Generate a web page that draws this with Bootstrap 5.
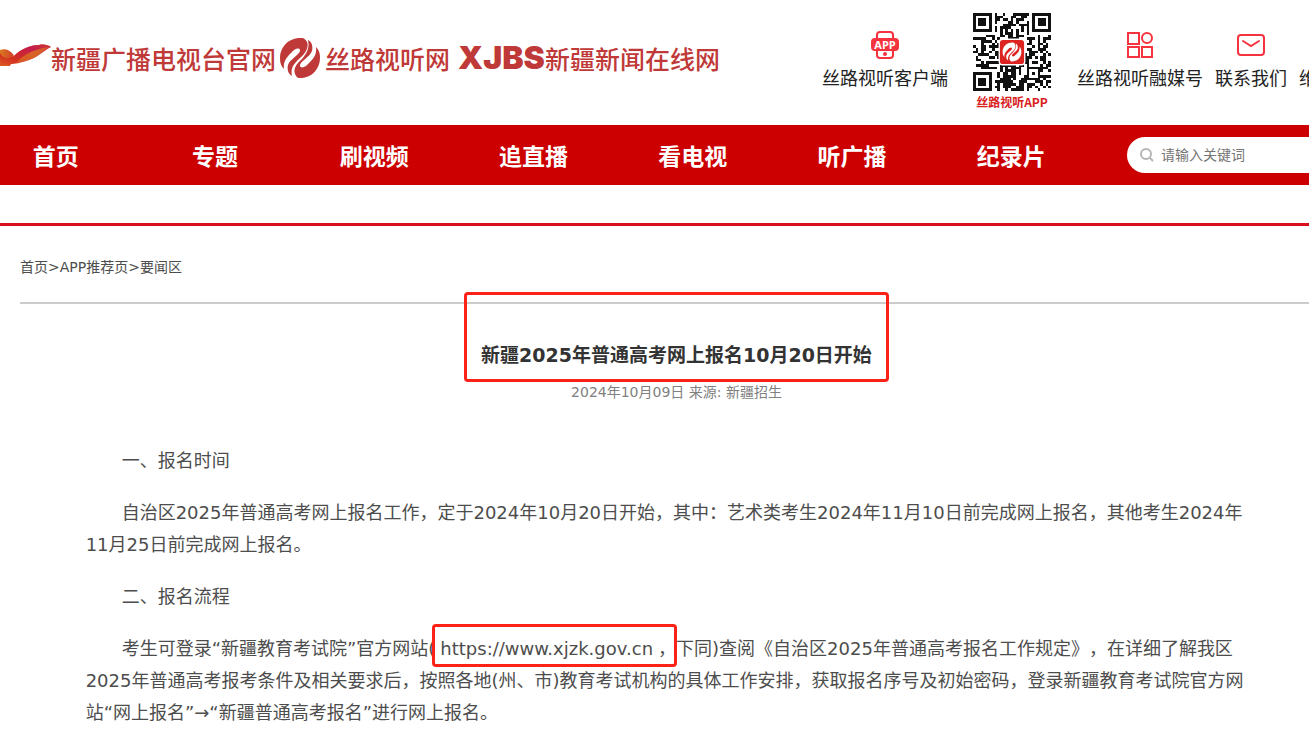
<!DOCTYPE html>
<html lang="zh-CN">
<head>
<meta charset="utf-8">
<meta name="viewport" content="width=device-width, initial-scale=1">
<title>新疆2025年普通高考网上报名10月20日开始</title>
<link href="https://cdn.jsdelivr.net/npm/bootstrap@5.3.0/dist/css/bootstrap.min.css" rel="stylesheet">
<style>
  body { font-family: "DejaVu Sans", "Noto Sans CJK SC", sans-serif; color: #4d4d4d; overflow-x: hidden; text-spacing-trim: space-all; }
  a { color: inherit; text-decoration: none; }
  /* the site is slightly wider than the window and runs past its right edge */
  .site-wide { width: calc(100% + 44px); }
  .site-head { height: 125px; }
  .brand-row { font: 500 25px/32px "Noto Sans CJK SC", sans-serif; color: #bf3938; white-space: nowrap; padding-top: 38px; }
  .brand-feather { width: 51px; height: 24px; margin-bottom: 6px; }
  .brand-swirl { width: 40px; height: 40px; margin: 0 5px; }
  .brand-xjbs { font: 900 32px/32px Inter, sans-serif; margin-left: 8px; }
  .brand-name { width: 224px; }
  .quick { font: 18px/24px "Noto Sans CJK SC", sans-serif; color: #222; white-space: nowrap; }
  .quick-item { padding-top: 31px; }
  .quick-item svg { display: block; margin-bottom: 6px; }
  .quick-cut { width: 54px; padding-top: 65px; }
  .qr-box { width: 78px; margin: 0 26px 0 25px; padding-top: 13px; }
  .qr-box svg { margin-bottom: 3px; }
  .qr-name { font: 700 12px/16px "Noto Sans CJK SC", sans-serif; color: #d8211d; }
  .site-nav { background: #c00; height: 60px; }
  .site-nav ul { margin-left: -24px; padding-top: 3px; font-size: 23px; line-height: 32px; }
  .site-nav li { flex: 1 1 0; }
  .find-box { width: 226px; height: 36px; margin-left: 36px; }
  .find-box input { font-size: 14px; line-height: 20px; outline: 0; }
  .find-box input::placeholder { color: #757575; opacity: 1; }
  .find-box svg { margin: 0 6px 0 12px; }
  .red-rule { margin-top: 38px; border-top: 3px solid #d9111b; }
  .crumbs { font-size: 14px; line-height: 20px; padding: 31px 0 25px; border-bottom: 2px solid #ccc; }
  .story { padding: 0 5%; font-size: 18px; line-height: 32px; }
  .story h1 { font-size: 19px; line-height: 28px; font-weight: 700; color: #333; margin: 37px 0 13px; }
  .story .byline { font-size: 14px; line-height: 20px; color: #808080; margin-bottom: 43px; }
  .story p.para { text-indent: 2em; margin-bottom: 20px; white-space: nowrap; }
  .story a { text-indent: 0; margin: 0 5px; }
  .ring { position: absolute; border: 3px solid #fb2218; border-radius: 4px; pointer-events: none; }
  .ring-title { inset: -49px -17px -13px; }
  .ring-link { inset: -9px -24px -2px -8px; }
</style>
</head>
<body class="bg-white">
<header class="site-wide site-head d-flex align-items-start">
  <div class="brand-row d-flex align-items-center">
    <svg class="brand-feather" viewBox="0 0 51 24" aria-hidden="true">
      <defs>
        <linearGradient id="fa" x1="0" y1="1" x2="1" y2="0"><stop offset="0" stop-color="#dc5a22"/><stop offset=".3" stop-color="#d3301f"/><stop offset=".6" stop-color="#cf3f2c"/><stop offset="1" stop-color="#c9253c"/></linearGradient>
        <linearGradient id="fb"><stop offset="0" stop-color="#db7a22"/><stop offset="1" stop-color="#d13d28"/></linearGradient>
        <linearGradient id="fc" x1="0" y1="1" x2="1" y2="0"><stop offset="0" stop-color="#d3301f"/><stop offset=".6" stop-color="#c41c4e"/><stop offset="1" stop-color="#cc3a35"/></linearGradient>
      </defs>
      <path d="M0 7C5 5 11 7 14 13L10 23L0 23Z" fill="url(#fb)"/>
      <path d="M0 10C3 15 8 17 14 13C21 6 30 2 39 2C44 1 48 2 51 4C42 9 38 14 29 17C19 21 9 21 0 23Z" fill="url(#fa)"/>
      <path d="M14 13C21 6 30 2 39 2C44 1 48 2 51 4C40 4 28 9 19 16Z" fill="url(#fc)"/>
      <path d="M16 20C25 10 36 6 49 4C41 9 38 14 29 17Z" fill="#dc7427" opacity=".65"/>
    </svg>
    <a href="#" class="brand-name">新疆广播电视台官网</a>
    <svg class="brand-swirl" viewBox="0 0 40 40" aria-hidden="true">
      <g id="swirl" fill="currentColor">
        <path id="swirl-half" d="M22 0C10-1 0 8 0 20C0 25 1 28 4 31C3 23 7 19 11 15C14 11 19 9 20 12C21 16 10 21 8 27C7 32 8 36 12 38C10 29 15 25 20 20C26 15 29 9 27 4C26 2 24 0 22 0Z"/>
        <path transform="rotate(180 20 20)" d="M21 0C10-1 0 8 0 20C0 25 1 28 4 31C3 23 7 19 11 15C14 11 19 9 20 12C21 16 10 21 8 27C7 32 8 36 12 38C10 29 14 24 18 19C24 14 27 9 25 4C24 2 23 0 21 0Z"/>
      </g>
    </svg>
    <a href="#">丝路视听网</a>
    <a href="#" class="brand-xjbs">XJBS</a><a href="#">新疆新闻在线网</a>
  </div>
  <nav class="quick d-flex align-items-start ms-auto" aria-label="快捷入口">
    <a href="#" class="quick-item d-flex flex-column align-items-center">
      <svg width="28" height="28" viewBox="0 0 28 28" fill="none" stroke="#f5333f" stroke-width="2" aria-hidden="true"><rect x="6" y="1" width="16" height="26" rx="3"/><rect x="1" y="8" width="26" height="11" rx="3" fill="#f5333f"/><circle cx="14" cy="23" r="1" fill="#f5333f"/><text x="14" y="18" text-anchor="middle" font-family="Open Sans" font-size="11" font-weight="700" fill="#fff" stroke="none">APP</text></svg>
      丝路视听客户端
    </a>
    <a href="#" class="qr-box d-flex flex-column align-items-center">
      <svg id="qr" width="78" height="78" viewBox="0 0 29 29" shape-rendering="crispEdges" role="img" aria-label="二维码"></svg>
      <span class="qr-name">丝路视听APP</span>
    </a>
    <a href="#" class="quick-item d-flex flex-column align-items-center">
      <svg width="28" height="28" viewBox="0 0 28 28" fill="none" stroke="#f5333f" stroke-width="2" aria-hidden="true"><path d="M2 2h11v11H2zM2 16h11v10H2zM16 16h10v10H16z"/><circle cx="21" cy="7" r="5"/></svg>
      丝路视听融媒号
    </a>
    <a href="#" class="quick-item d-flex flex-column align-items-center mx-2 px-1">
      <svg width="28" height="28" viewBox="0 0 28 28" fill="none" stroke="#f5333f" stroke-width="2" stroke-linecap="round" aria-hidden="true"><rect x="1" y="4" width="26" height="20" rx="3"/><path d="M6 10l8 5l8-5"/></svg>
      联系我们
    </a>
    <a href="#" class="quick-cut">维</a>
  </nav>
</header>

<nav class="site-wide site-nav d-flex align-items-center" aria-label="主导航">
  <ul class="list-unstyled d-flex flex-grow-1 mb-0 fw-bold text-white text-center">
    <li><a href="#">首页</a></li><li><a href="#">专题</a></li><li><a href="#">刷视频</a></li><li><a href="#">追直播</a></li><li><a href="#">看电视</a></li><li><a href="#">听广播</a></li><li><a href="#">纪录片</a></li>
  </ul>
  <form class="find-box bg-white rounded-pill d-flex align-items-center flex-shrink-0">
    <svg width="16" height="16" viewBox="0 0 16 16" fill="none" stroke="#b5b5b5" stroke-width="2" aria-hidden="true"><circle cx="7" cy="7" r="5"/><path d="M11 11l3 3"/></svg>
    <input type="text" class="border-0 bg-transparent p-0 flex-grow-1" placeholder="请输入关键词" aria-label="请输入关键词">
  </form>
</nav>
<div class="red-rule"></div>

<main class="site-wide px-3">
  <div class="px-1">
  <nav class="crumbs" aria-label="当前位置"><a href="#">首页</a>&gt;<a href="#">APP推荐页</a>&gt;<a href="#">要闻区</a></nav>
  <article class="story">
    <h1 class="text-center"><span class="position-relative d-inline-block">新疆2025年普通高考网上报名10月20日开始<span class="ring ring-title"></span></span></h1>
    <div class="byline text-center">2024年10月09日 来源: 新疆招生</div>
    <p class="para">一、报名时间</p>
    <p class="para">自治区2025年普通高考网上报名工作，定于2024年10月20日开始，其中：艺术类考生2024年11月10日前完成网上报名，其他考生2024年<br>11月25日前完成网上报名。</p>
    <p class="para">二、报名流程</p>
    <p class="para mb-0">考生可登录“新疆教育考试院”官方网站(<a href="#" class="position-relative d-inline-block">https://www.xjzk.gov.cn<span class="ring ring-link"></span></a>，下同)查阅《自治区2025年普通高考报名工作规定》，在详细了解我区<br>2025年普通高考报考条件及相关要求后，按照各地(州、市)教育考试机构的具体工作安排，获取报名序号及初始密码，登录新疆教育考试院官方网<br>站“网上报名”→“新疆普通高考报名”进行网上报名。</p>
  </article>
  </div>
</main>

<script>
  // Draws the download code: finder squares, timing lines, data modules and the logo on top.
  const N = 29;
  let seed = 77, d = '';
  const rnd = () => (seed = (seed * 1103515245 + 12345) % 2147483648) / 2147483648;
  const ringAt = (x, y, cx, cy, r) => {
    const k = Math.max(Math.abs(x - cx), Math.abs(y - cy));
    return k > r ? null : k;
  };
  for (let y = 0; y < N; y++) for (let x = 0; x < N; x++) {
    let on = rnd() < 0.5;
    for (const [cx, cy] of [[3, 3], [25, 3], [3, 25]]) {
      const k = ringAt(x, y, cx, cy, 4);
      if (k !== null) on = k !== 4 && k !== 2;
    }
    const a = ringAt(x, y, 22, 22, 2);
    if (a !== null) on = a !== 1;
    if ((y === 6 && x > 7 && x < 21) || (x === 6 && y > 7 && y < 21)) on = (x + y) % 2 === 0;
    if (on) d += `M${x} ${y}h1v1h-1z`;
  }
  document.getElementById('qr').innerHTML =
    `<path d="${d}" fill="#111"/><g shape-rendering="auto"><rect x="9.5" y="9.5" width="10" height="10" rx="1.5" fill="#fff"/>
     <rect x="10" y="10" width="9" height="9" rx="1.2" fill="#dc231f"/>
     <g transform="translate(11 11) scale(.175)" color="#fff"><use href="#swirl"/></g></g>`;
</script>
<script src="https://cdn.jsdelivr.net/npm/bootstrap@5.3.0/dist/js/bootstrap.bundle.min.js"></script>
</body>
</html>
